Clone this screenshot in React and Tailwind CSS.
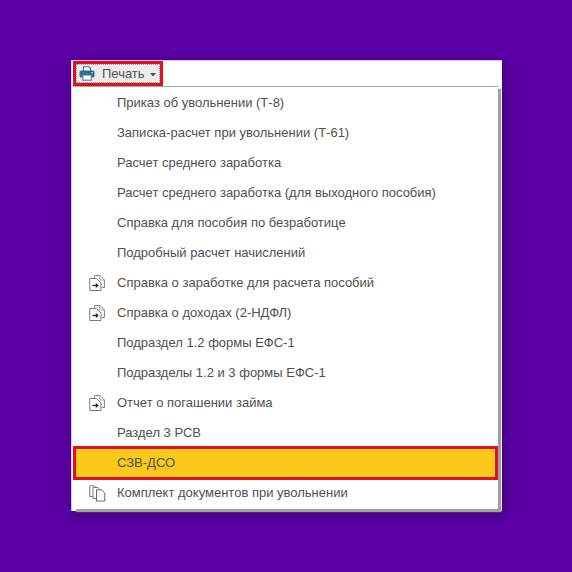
const items = [
  { label: "Приказ об увольнении (Т-8)" },
  { label: "Записка-расчет при увольнении (Т-61)" },
  { label: "Расчет среднего заработка" },
  { label: "Расчет среднего заработка (для выходного пособия)" },
  { label: "Справка для пособия по безработице" },
  { label: "Подробный расчет начислений" },
  { label: "Справка о заработке для расчета пособий", icon: "doc" },
  { label: "Справка о доходах (2-НДФЛ)", icon: "doc" },
  { label: "Подраздел 1.2 формы ЕФС-1" },
  { label: "Подразделы 1.2 и 3 формы ЕФС-1" },
  { label: "Отчет о погашении займа", icon: "doc" },
  { label: "Раздел 3 РСВ" },
  { label: "СЗВ-ДСО", active: true },
  { label: "Комплект документов при увольнении", icon: "copies" },
];

function PrinterIcon() {
  return (
    <svg width="16" height="15" viewBox="0 0 16 15">
      <path d="M4.5 5V0.8H10L11.5 2.3V5" fill="#fff" stroke="#3f6f96" strokeWidth="1.1" />
      <rect x="0.5" y="4.5" width="15" height="7" rx="1.6" fill="#356c96" />
      <rect x="3.8" y="9" width="8.4" height="5.2" fill="#fff" stroke="#4d7ea3" strokeWidth="1.1" />
      <rect x="12.3" y="6" width="1.6" height="1.2" fill="#c6d8e6" />
    </svg>
  );
}

function DocIcon() {
  return (
    <svg width="17" height="16" viewBox="0 0 17 16" fill="none">
      <path d="M5.5 3.5V0.5H11L15.5 5V12.5H12.5" stroke="#7a8a92" />
      <path d="M10.8 0.5V5H15.5" stroke="#9aa6ac" />
      <path d="M0.8 3.5H7.5L12 8V15.5H0.8Z" fill="#fff" stroke="#6f7f88" />
      <path d="M3.5 10.5H8" stroke="#222" strokeWidth="1.3" />
      <path d="M6.8 8L9.8 10.5L6.8 13Z" fill="#222" />
    </svg>
  );
}

function CopiesIcon() {
  return (
    <svg width="17" height="17" viewBox="0 0 17 17" fill="none">
      <path d="M0.8 0.8H5.5L7 2.5V11.5H0.8Z" fill="#fff" stroke="#7d7d7d" />
      <path d="M4 2.5H9L10.8 4.5V13.5H4Z" fill="#fff" stroke="#7d7d7d" />
      <path d="M7.5 4.8H12.5L15.8 8V16H7.5Z" fill="#fff" stroke="#666" />
    </svg>
  );
}

export default function App() {
  return (
    <div className="flex h-[572px] w-[572px] items-start justify-start overflow-hidden bg-[#5c00a6] pl-[71px] pt-[60px] font-['Liberation_Sans',Arial,sans-serif]">
      <div className="h-[451px] w-[431px] border-l border-t border-[#d9c6e8] bg-white pl-px shadow-[2px_3px_14px_rgba(30,0,70,0.55)]">
        {/* Toolbar */}
        <div className="flex h-[25px]">
          <button className="w-[90px] border-[3px] border-[#e2101c]">
            <span className="flex h-full items-center border border-dotted border-[#a0a0a0] bg-[#ececec] pl-[2px] text-[13px] text-[#505050]">
              <PrinterIcon />
              <span className="ml-[7px]">Печать</span>
              <svg width="6" height="4" viewBox="0 0 6 4" className="ml-[5px] mt-[2px]">
                <path d="M0 0H6L3 3.5Z" fill="#505050" />
              </svg>
            </span>
          </button>
        </div>

        {/* Menu */}
        <div className="flex h-[423px] w-[425px] flex-col border-t border-[#a8a8a8] bg-white pt-px shadow-[3px_3px_1px_#a0a0a0]">
          {items.map((item) =>
            item.active ? (
              <div
                key={item.label}
                className="-my-[2px] flex h-[34px] shrink-0 items-center border-[3px] border-[#e2101c] bg-[#fac91c] pl-[41px] text-[13px] text-[#55503a]"
              >
                {item.label}
              </div>
            ) : (
              <div key={item.label} className="flex h-[30px] shrink-0 items-center text-[13px] text-[#505050]">
                <span className="flex w-[44px] justify-end pr-[11px]">
                  {item.icon === "doc" && <DocIcon />}
                  {item.icon === "copies" && <CopiesIcon />}
                </span>
                <span>{item.label}</span>
              </div>
            )
          )}
        </div>
      </div>
    </div>
  );
}
